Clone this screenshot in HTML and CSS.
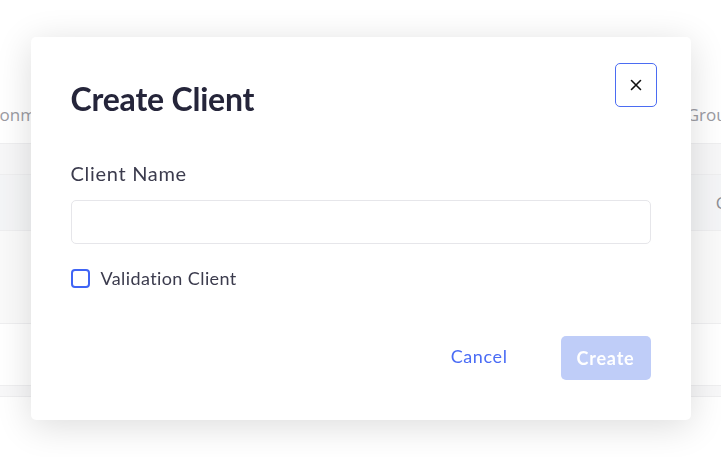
FILE: index.html
```html
<!DOCTYPE html>
<html lang="en">
<head>
<meta charset="utf-8">
<title>Create Client</title>
<link rel="stylesheet" href="styles.css">
</head>
<body>
<div class="page">
  <div class="table">
    <div class="thead">
      <span class="th th-left">Environment</span>
      <span class="th th-right">Group</span>
    </div>
    <div class="row row-a"></div>
    <div class="row row-b"><span class="cell-right">Client</span></div>
    <div class="row row-c"></div>
    <div class="row row-d"></div>
    <div class="row row-e"></div>
  </div>
</div>

<div class="overlay">
  <div class="modal" role="dialog" aria-labelledby="modal-title">
    <div class="modal-header">
      <h2 class="modal-title" id="modal-title">Create Client</h2>
      <button class="close-btn" type="button" aria-label="Close">
        <svg width="12" height="12" viewBox="0 0 12 12" aria-hidden="true">
          <path d="M1.5 1.5 L10.5 10.5 M10.5 1.5 L1.5 10.5" stroke="#111" stroke-width="1.6" stroke-linecap="round" fill="none"/>
        </svg>
      </button>
    </div>
    <div class="modal-body">
      <label class="field-label" for="client-name">Client Name</label>
      <input class="text-input" id="client-name" type="text">
      <label class="check-row">
        <span class="checkbox"></span>
        <span class="check-text">Validation Client</span>
      </label>
    </div>
    <div class="modal-footer">
      <button class="btn-link" type="button">Cancel</button>
      <button class="btn-primary" type="button" disabled>Create</button>
    </div>
  </div>
</div>
</body>
</html>
```

FILE: styles.css
```css
* { box-sizing: border-box; }

html, body {
  margin: 0;
  padding: 0;
  width: 721px;
  height: 457px;
  overflow: hidden;
  background: #ffffff;
  font-family: "Lato", "Noto Sans", sans-serif;
}

/* background page */
.page {
  padding-top: 100px;
}

.table {
  display: flex;
  flex-direction: column;
}

.thead {
  height: 43px;
  display: flex;
  justify-content: space-between;
  align-items: flex-start;
  padding-top: 3px;
  color: #8a8a92;
  font-family: "Open Sans", sans-serif;
  font-size: 17px;
}

.th-left { margin-left: -40px; }
.th-right { margin-right: -16px; }

.row {
  border-top: 1px solid #ececee;
}
.row-a { height: 31px; background: #f6f6f7; }
.row-b {
  height: 56px;
  background: #f3f4f6;
  display: flex;
  justify-content: flex-end;
  align-items: center;
}
.row-c { height: 93px; background: #fafafa; }
.row-d { height: 62px; background: #ffffff; }
.row-e { height: 12px; background: #f7f7f8; border-bottom: 1px solid #ececee; }

.cell-right {
  color: #7a7a82;
  font-family: "Open Sans", sans-serif;
  font-size: 17px;
  margin-right: -40px;
}

/* overlay + modal */
.overlay {
  position: fixed;
  inset: 0;
  display: flex;
  align-items: center;
  justify-content: center;
  background: rgba(255, 255, 255, 0.15);
}

.modal {
  width: 660px;
  background: #ffffff;
  border-radius: 5px;
  box-shadow: 0 6px 36px rgba(0, 0, 0, 0.14);
  padding: 26px 34px 40px 40px;
  display: flex;
  flex-direction: column;
}

.modal-header {
  display: flex;
  justify-content: space-between;
  align-items: flex-start;
}

.modal-title {
  margin: 18px 0 0 0;
  font-size: 32px;
  line-height: 36px;
  font-weight: 700;
  color: #25253a;
  letter-spacing: -0.2px;
}

.close-btn {
  width: 42px;
  height: 44px;
  border: 1px solid #4b6cf2;
  border-radius: 5px;
  background: #ffffff;
  display: flex;
  align-items: center;
  justify-content: center;
  padding: 0;
}

.modal-body {
  display: flex;
  flex-direction: column;
  padding-right: 6px;
  margin-top: 44px;
}

.field-label {
  font-size: 20px;
  line-height: 24px;
  letter-spacing: 0.7px;
  color: #3b3b4d;
}

.text-input {
  margin-top: 15px;
  height: 44px;
  width: 100%;
  border: 1px solid #e6e6ea;
  border-radius: 5px;
  background: #ffffff;
}

.check-row {
  margin-top: 23px;
  display: flex;
  align-items: center;
  gap: 11px;
}

.checkbox {
  width: 19px;
  height: 19px;
  border: 2px solid #3f64f5;
  border-radius: 4px;
  background: #ffffff;
}

.check-text {
  font-size: 18px;
  line-height: 22px;
  letter-spacing: 0.4px;
  color: #3b3b4d;
}

.modal-footer {
  display: flex;
  justify-content: flex-end;
  align-items: center;
  gap: 53px;
  margin-top: 47px;
  padding-right: 6px;
}

.btn-link {
  border: none;
  background: transparent;
  color: #4a6cf5;
  font-family: inherit;
  font-size: 18px;
  letter-spacing: 0.6px;
  padding: 0;
  margin-top: -4px;
}

.btn-primary {
  width: 90px;
  height: 44px;
  border: none;
  border-radius: 5px;
  background: #bfcdf8;
  color: #ffffff;
  font-family: inherit;
  font-size: 18px;
  font-weight: 700;
  letter-spacing: 0.8px;
  padding: 0;
}
```
